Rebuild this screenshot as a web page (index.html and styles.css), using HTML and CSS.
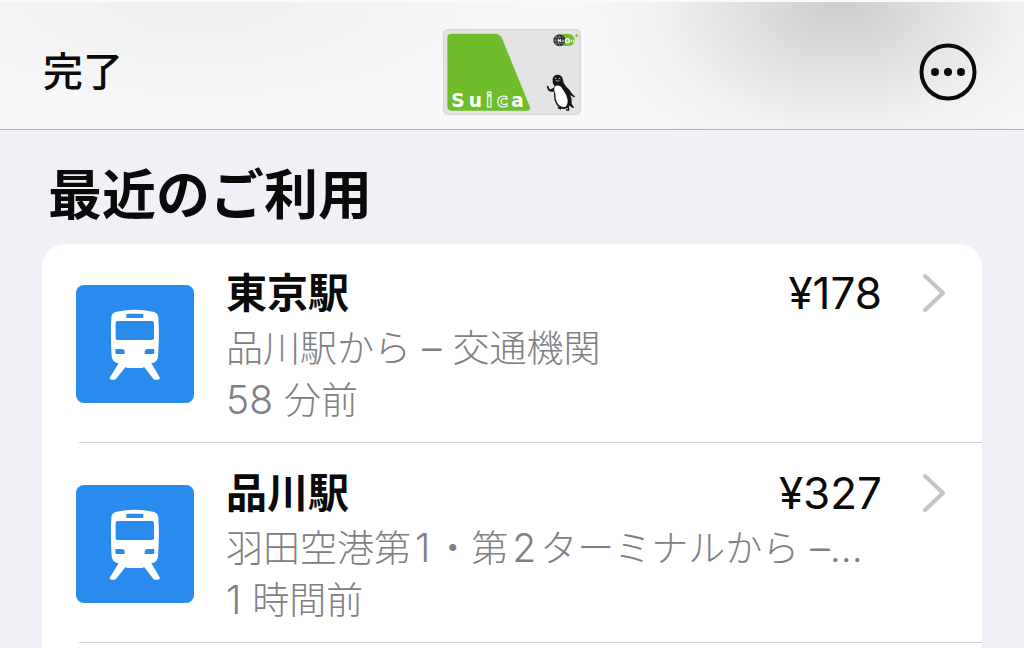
FILE: index.html
```html
<!DOCTYPE html>
<html lang="ja">
  <head>
    <meta charset="UTF-8" />
    <meta name="viewport" content="width=device-width, initial-scale=1.0" />
    <title>Suica</title>
    <link rel="stylesheet" href="styles.css" />
  </head>
  <body>
    <header class="header">
      <button class="done" type="button">完了</button>
      <svg class="pass" viewBox="0 0 414 258" role="img" aria-label="Suica">
        <rect x="2" y="2" width="410" height="254" rx="12" fill="#e3e3e4" stroke="#cfcfd1" stroke-width="3" />
        <path d="M26 14H156Q171 14 177 28L260 232Q264 245 252 245H26Q13 245 13 232V27Q13 14 26 14Z" fill="#6fbd2b" />
        <g class="pass-name">
          <text x="25" y="233">S</text>
          <text x="77" y="233">u</text>
          <text class="outlined" x="129" y="233">i</text>
          <text class="outlined" x="162" y="233">c</text>
          <text x="205" y="233">a</text>
        </g>
        <!-- card mark -->
        <rect x="345" y="15" width="50" height="36" rx="18" fill="#6fbd2b" />
        <circle cx="349" cy="34" r="18" fill="#2a2b2c" />
        <path d="M332 34H344M349 17V27M349 42V51M336 23Q349 30 362 23M336 45Q349 38 362 45M341 18Q333 34 341 50" fill="none" stroke="#8f9190" stroke-width="2" />
        <path d="M346 40V30L353 39V30M360 32V40M385 32V40M391 32V40" fill="none" stroke="#fff" stroke-width="3" />
        <circle cx="373" cy="35" r="6" fill="#8dcb55" stroke="#fff" stroke-width="4" />
        <path d="M401 15V25M396 20H406" stroke="#6fbd2b" stroke-width="3" />
        <!-- penguin -->
        <path d="M336 171Q328 183 320 180L315 170L311 172L315 184Q324 192 338 186Z" fill="#141516" />
        <path d="M329 150Q331 137 345 137Q359 139 360 153Q360 163 370 173Q380 181 386 193L397 204L392 205L382 198Q388 211 386 224L394 237Q388 238 380 230Q376 238 364 240Q348 240 340 226Q332 213 333 196L334 170Q327 162 329 150Z" fill="#141516" />
        <path d="M336 172Q350 164 360 182Q371 196 374 213Q375 226 367 234Q351 236 343 222Q336 209 337 194Q331 181 336 172Z" fill="#fff" />
        <circle cx="338" cy="148" r="2" fill="#fff" />
        <circle cx="350" cy="148" r="2" fill="#fff" />
        <path d="M336 155Q343 149 351 155Q344 160 336 155Z" fill="#77797b" />
        <path d="M352 231L352 239L344 236M376 233L377 243L369 243" fill="none" stroke="#141516" stroke-width="4" />
      </svg>
      <button class="more" type="button" aria-label="その他">
        <svg viewBox="0 0 58 58">
          <circle cx="29" cy="29" r="26.5" fill="none" stroke="currentColor" stroke-width="4" />
          <g fill="currentColor">
            <circle cx="16" cy="29" r="4" />
            <circle cx="29" cy="29" r="4" />
            <circle cx="42" cy="29" r="4" />
          </g>
        </svg>
      </button>
    </header>

    <main class="content">
      <h1 class="title">最近のご利用</h1>
      <div class="list">
        <a class="row" href="#">
          <svg class="icon" viewBox="0 0 354 354">
            <use href="#train" />
          </svg>
          <div class="details">
            <div class="top">
              <h2 class="station">東京駅</h2>
              <span class="price">¥178</span>
            </div>
            <div class="sub">品川駅から<span class="latin"> – </span>交通機関</div>
            <div class="sub"><span class="latin">58 </span>分前</div>
          </div>
          <svg class="chevron" viewBox="0 0 22 38"><path d="M2 2L20 19L2 36" /></svg>
        </a>
        <a class="row" href="#">
          <svg class="icon" viewBox="0 0 354 354">
            <use href="#train" />
          </svg>
          <div class="details">
            <div class="top">
              <h2 class="station">品川駅</h2>
              <span class="price">¥327</span>
            </div>
            <div class="sub">羽田空港第<span class="latin number">1</span>・第<span class="latin number">2</span>ターミナルから<span class="latin"> –…</span></div>
            <div class="sub"><span class="latin">1 </span>時間前</div>
          </div>
          <svg class="chevron" viewBox="0 0 22 38"><path d="M2 2L20 19L2 36" /></svg>
        </a>
      </div>
    </main>

    <svg class="symbols" aria-hidden="true">
      <symbol id="train" viewBox="0 0 354 354">
        <path fill="#fff" fill-rule="evenodd" d="M106 97Q107 84 122 80Q148 74 176 74Q205 74 231 80Q246 84 247 97Q251 151 246 215Q244 233 226 235L251 277Q253 284 245 284H237Q233 284 230 279L204 246Q202 249 196 249H156Q151 249 149 246L122 279Q119 284 115 284H107Q99 284 102 277L128 235Q110 233 107 215Q103 151 106 97ZM154 86Q151 86 151 89V96Q151 99 154 99H199Q202 99 202 96V89Q202 86 199 86ZM125 108Q119 108 119 114V159Q119 165 125 165H228Q234 165 234 159V114Q234 108 228 108ZM122 192Q118 192 118 196V203Q118 207 122 207H146V201Q146 192 137 192ZM231 192Q235 192 235 196V203Q235 207 231 207H206V201Q206 192 215 192Z" />
      </symbol>
    </svg>
  </body>
</html>
```
FILE: styles.css
```css
* {
  box-sizing: border-box;
  margin: 0;
  padding: 0;
}
body {
  display: flex;
  flex-direction: column;
  min-height: 100vh;
  background-color: #f1f0f6;
  color: #0a0a0a;
  font-family: Inter, "Noto Sans CJK JP", sans-serif;
}
button {
  border: none;
  background: none;
  color: inherit;
  font-family: inherit;
  cursor: pointer;
}
.header {
  display: grid;
  grid-template-columns: 1fr auto 1fr;
  align-items: center;
  height: 130px;
  padding: 12px 43px 0;
  border-top: 2px solid #fafafa;
  border-bottom: 1px solid #b3b2b9;
  background:
    radial-gradient(ellipse 260px 180px at 840px 0, #cdcdce, rgba(210, 210, 212, 0.6) 40%, rgba(225, 225, 227, 0.3) 70%, transparent),
    radial-gradient(ellipse 340px 120px at 200px 0, #efefef, transparent),
    #f8f8fa;
}
.done {
  justify-self: start;
  font-size: 40px;
  font-weight: 500;
  line-height: 58px;
}
.pass {
  width: 138px;
  height: 86px;
}
.pass-name {
  fill: #fff;
  font-family: "DejaVu Sans", sans-serif;
  font-size: 56px;
  font-weight: bold;
}
.outlined {
  fill: #6fbd2b;
  stroke: #fff;
  stroke-width: 3px;
}
.more {
  justify-self: end;
  width: 58px;
  height: 58px;
  margin-right: 4px;
}
.more svg {
  display: block;
}
.content {
  flex: 1;
  display: flex;
  flex-direction: column;
  padding: 26px 42px 0;
}
.title {
  padding-left: 6px;
  font-size: 54px;
  font-weight: 600;
  line-height: 80px;
}
.list {
  flex: 1;
  margin-top: 8px;
  border-radius: 24px 24px 0 0;
  background-color: #fff;
}
.row {
  position: relative;
  display: flex;
  align-items: flex-start;
  padding: 21px 37px 17px 34px;
  color: inherit;
  text-decoration: none;
}
/* inset separator */
.row::after {
  content: "";
  position: absolute;
  left: 37px;
  right: 0;
  bottom: 1px;
  height: 1px;
  background-color: #cfcfd1;
}
.icon {
  flex: none;
  width: 118px;
  height: 118px;
  margin-top: 20px;
  border-radius: 8px;
  background-color: #2a8bee;
}
.details {
  flex: 1;
  min-width: 0;
  padding: 0 41px 0 32px;
}
.top {
  display: flex;
  justify-content: space-between;
  margin-bottom: 2px;
}
.station {
  font-size: 41px;
  font-weight: 600;
  line-height: 56px;
}
.price {
  font-size: 44px;
  line-height: 56px;
}
.sub {
  color: #808084;
  font-size: 37px;
  font-weight: 300;
  line-height: 52px;
  white-space: nowrap;
}
.latin {
  font-size: 39px;
  font-weight: 350;
  line-height: 1;
}
.number {
  padding: 0 4px;
}
.chevron {
  flex: none;
  width: 22px;
  height: 38px;
  margin-top: 9px;
  fill: none;
  stroke: #c4c4c6;
  stroke-width: 4;
  stroke-linecap: round;
  stroke-linejoin: round;
}
.symbols {
  display: none;
}
```
